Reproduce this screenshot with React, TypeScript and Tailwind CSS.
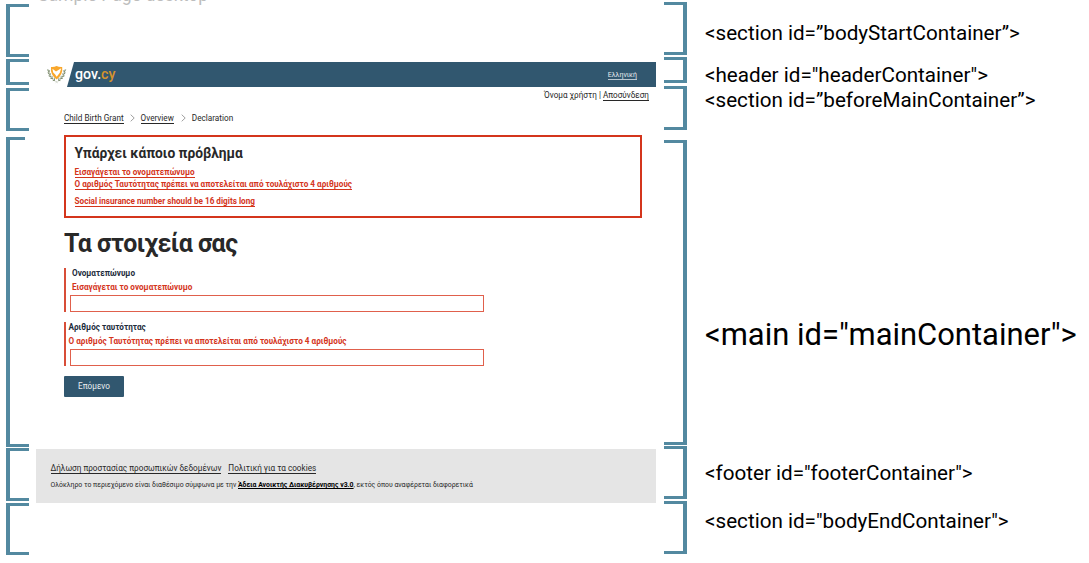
import React from "react";

const leftBrackets = [
  "mt-[4px] h-[53px]",
  "mt-[2px] h-[25.5px]",
  "mt-[3.5px] h-[43px]",
  "mt-[6px] mr-[4px] h-[3px] border-b-0",
  "h-[307px] border-t-0",
  "mt-[1px] h-[52.5px]",
  "mt-[2px] h-[52.5px]",
];

const rightBrackets = [
  "mt-[2px] h-[53px]",
  "mt-[2px] h-[26px]",
  "mt-[3px] h-[44px]",
  "mt-[10px] h-[305px]",
  "mt-[1px] h-[53px]",
  "mt-[2px] h-[53px]",
];

const labels = [
  { text: "<section id=”bodyStartContainer”>", cls: "mt-[20px] h-[26px] text-[20.65px]" },
  { text: '<header id="headerContainer">', cls: "mt-[16px] h-[26px] text-[20.65px]" },
  { text: "<section id=”beforeMainContainer”>", cls: "h-[25px] text-[20.65px]" },
  { text: '<main id="mainContainer">', cls: "mt-[202px] h-[40px] text-[30.95px]" },
  { text: '<footer id="footerContainer">', cls: "mt-[105px] h-[26px] text-[20.65px]" },
  { text: '<section id="bodyEndContainer">', cls: "mt-[22px] h-[26px] text-[20.65px]" },
];

function Logo() {
  return (
    <svg viewBox="0 0 20 20" className="mt-[2px] ml-[11px] h-[20px] w-[20px] shrink-0">
      <path d="M4 2.9Q7.2 3.2 9.6 1.9Q12 3.2 15.2 2.9Q16.2 10.6 9.6 15.4Q3 10.6 4 2.9Z" fill="#f9a72b" />
      <path d="M5.4 4.8L9 7.6L14.2 4.2L12.8 8.8L9.7 12.8L8 10.2L6.2 8.6Z" fill="#fff" />
      <path d="M1 5Q1.4 13.6 8.6 17.4M18.2 5Q17.8 13.6 10.6 17.4" fill="none" stroke="#9aa58c" strokeWidth=".6" />
      <path d="M.5 5.6L1.9 7.8M.7 8.8L2.9 10.4M1.6 11.8L4.2 12.8M3.4 14.4L6 14.6M5.8 16.6L8 16.2M2.4 6.2L2 8.8M3.3 9.2L3.2 11.6M5 11.8L5.1 14M7.2 13.8L7.5 16M18.7 5.6L17.3 7.8M18.5 8.8L16.3 10.4M17.6 11.8L15 12.8M15.8 14.4L13.2 14.6M13.4 16.6L11.2 16.2M16.8 6.2L17.2 8.8M15.9 9.2L16 11.6M14.2 11.8L14.1 14M12 13.8L11.7 16" stroke="#6b7b59" strokeWidth=".8" />
      <path d="M8.8 18.6L9.6 17.9L10.4 18.6" fill="none" stroke="#8a977b" strokeWidth=".7" />
    </svg>
  );
}

function Chevron() {
  return (
    <svg viewBox="0 0 5 8" className="h-[8px] w-[5px] shrink-0">
      <path d="M.7 .7L4.2 4L.7 7.3" fill="none" stroke="#777" strokeWidth=".7" />
    </svg>
  );
}

const link = "w-fit border-b whitespace-nowrap";

export default function App() {
  return (
    <div className="flex h-[563px] w-[1089px] overflow-hidden bg-white font-['Roboto','Noto_Sans',sans-serif] text-[#282828]">
      <div className="ml-[5.5px] flex w-[23.5px] shrink-0 flex-col">
        {leftBrackets.map((c) => (
          <div key={c} className={`shrink-0 border-y-[3px] border-l-[4px] border-[#5389a0] ${c}`} />
        ))}
      </div>

      <div className="ml-[7px] flex w-[620px] shrink-0 flex-col">
        <div className="flex h-[62px] shrink-0">
          <div className="-mt-[15px] ml-[2px] h-[20px] text-[17.6px] leading-[20px] whitespace-nowrap text-[#bdbdbd]">Sample Page desktop</div>
        </div>
        <header className="flex h-[25px] shrink-0">
          <Logo />
          <div className="flex flex-1 items-center justify-between bg-[#31576f] pr-[19px] pl-[8px] [clip-path:polygon(7px_0,100%_0,100%_100%,0_100%)]">
            <div className="text-[14.2px] font-medium text-white">
              gov.<span className="text-[#d5932c]">cy</span>
            </div>
            <a className="mt-[1px] border-b border-[#b9c7d0] text-[7px] leading-[8px] text-[#e3e9ed]">Ελληνική</a>
          </div>
        </header>
        <div className="flex h-[18px] shrink-0 items-start justify-end gap-[2px] pt-[3px] pr-[7px] text-[8.17px] leading-[10px]">
          <span>Όνομα χρήστη |</span>
          <a className="border-b">Αποσύνδεση</a>
        </div>
        <nav className="mt-[8px] ml-[28px] flex h-[10px] shrink-0 items-center text-[8.2px] leading-[9px]">
          <a className="mt-[1px] mr-[6.5px] border-b">Child Birth Grant</a>
          <Chevron />
          <a className="mt-[1px] mr-[7.5px] ml-[5.5px] border-b">Overview</a>
          <Chevron />
          <span className="ml-[5.5px]">Declaration</span>
        </nav>
        <main className="mt-[11px] flex h-[315px] shrink-0 flex-col pl-[28px]">
          <div className="mt-[1px] flex h-[83px] w-[578px] shrink-0 flex-col border-2 border-[#d4351c] pl-[8.5px] text-[8.17px] leading-[9px] font-bold text-[#d4351c]">
            <h2 className="mt-[7px] h-[18px] text-[13.75px] leading-[18px] font-bold text-[#282828]">Υπάρχει κάποιο πρόβλημα</h2>
            <a className={`mt-[6px] ${link}`}>Εισαγάγεται το ονοματεπώνυμο</a>
            <a className={`mt-[2px] ${link}`}>Ο αριθμός Ταυτότητας πρέπει να αποτελείται από τουλάχιστο 4 αριθμούς</a>
            <a className={`mt-[7px] ${link}`}>Social insurance number should be 16 digits long</a>
          </div>
          <h1 className="mt-[10px] h-[32px] text-[24.9px] leading-[32px] font-bold tracking-[-0.5px]">Τα στοιχεία σας</h1>
          <div className="mt-[8px] flex h-[44px] w-[420px] shrink-0 flex-col border-l-2 border-[#d84e38] pl-[4px] text-[8.19px] font-bold">
            <label className="ml-[2px] h-[12px] leading-[11px] text-[#1d2c3c]">Ονοματεπώνυμο</label>
            <span className="ml-[2px] h-[15px] leading-[15px] text-[#d4351c]">Εισαγάγεται το ονοματεπώνυμο</span>
            <div className="h-[17px] border border-[#e0604c]" />
          </div>
          <div className="mt-[10px] flex h-[44px] w-[420px] shrink-0 flex-col border-l-2 border-[#d84e38] pl-[4px] text-[8.19px] font-bold">
            <label className="-ml-[1.5px] h-[12px] leading-[11px] text-[#1d2c3c]">Αριθμός ταυτότητας</label>
            <span className="-ml-[1.5px] h-[15px] leading-[15px] text-[#d4351c]">Ο αριθμός Ταυτότητας πρέπει να αποτελείται από τουλάχιστο 4 αριθμούς</span>
            <div className="h-[17px] border border-[#e0604c]" />
          </div>
          <button className="mt-[10px] h-[21px] w-[60px] shrink-0 rounded-[1px] bg-[#31576f] text-[8.2px] text-[#e8edf0]">Επόμενο</button>
        </main>
        <footer className="flex h-[54px] shrink-0 flex-col bg-[#e5e5e5] pl-[14.5px]">
          <div className="mt-[15px] flex gap-[7px] text-[8.17px] leading-[9px]">
            <a className={link}>Δήλωση προστασίας προσωπικών δεδομένων</a>
            <a className={link}>Πολιτική για τα cookies</a>
          </div>
          <p className="mt-[6px] text-[6.88px] leading-[10px] whitespace-nowrap">
            Ολόκληρο το περιεχόμενο είναι διαθέσιμο σύμφωνα με την{" "}
            <a className="font-bold text-black underline">Άδεια Ανοικτής Διακυβέρνησης v3.0</a>, εκτός όπου αναφέρεται διαφορετικά
          </p>
        </footer>
      </div>

      <div className="ml-[7.5px] flex w-[23.5px] shrink-0 flex-col">
        {rightBrackets.map((c) => (
          <div key={c} className={`shrink-0 border-y-[3px] border-r-[4px] border-[#5389a0] ${c}`} />
        ))}
      </div>

      <div className="ml-[18px] flex flex-1 flex-col text-black">
        {labels.map((l) => (
          <div key={l.text} className={`flex shrink-0 items-center whitespace-nowrap ${l.cls}`}>
            {l.text}
          </div>
        ))}
      </div>
    </div>
  );
}
